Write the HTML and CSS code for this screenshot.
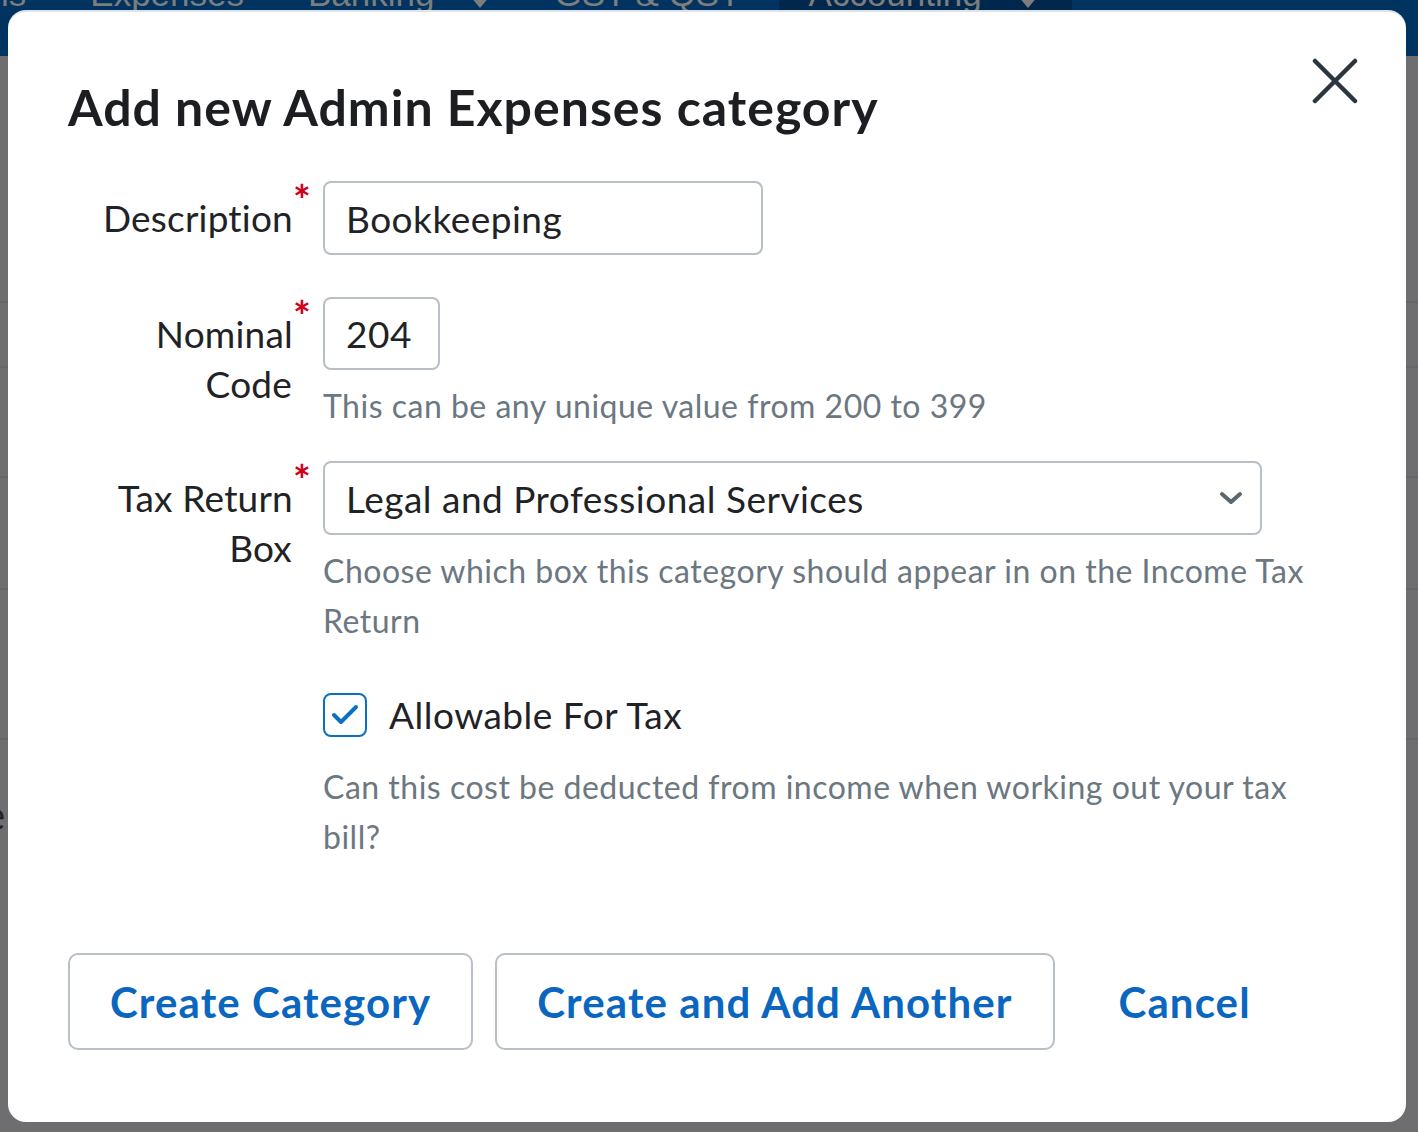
FILE: index.html
```html
<!DOCTYPE html>
<html>
<head>
    <meta charset="utf-8" />
    <meta name="viewport" content="width=device-width,initial-scale=1" />
    <title>Add new Admin Expenses category</title>
    <link rel="stylesheet" href="styles.css">
</head>
<body>
    <div id="nav">
        <span class="nav-item first">ls</span>
        <span class="nav-item">Expenses</span>
        <span class="nav-item">Banking<i class="caret"></i></span>
        <span class="nav-item">GST &amp; QST</span>
        <span class="nav-item active">Accounting<i class="caret"></i></span>
    </div>
    <div id="page">
        <div class="page-row r1">s</div>
        <div class="page-row r2"></div>
        <div class="page-row r3"></div>
        <div class="page-row r4"></div>
        <div class="page-row r5"></div>
        <div class="page-row r6">e</div>
    </div>

    <div id="modal">
        <div class="modal-head">
            <h1>Add new Admin Expenses category</h1>
            <button class="close" aria-label="Close">
                <svg width="46" height="46" viewBox="0 0 46 46">
                    <path d="M3 3 L43 43 M43 3 L3 43" stroke="#2b3640" stroke-width="4.5" stroke-linecap="round" fill="none"/>
                </svg>
            </button>
        </div>

        <form class="form">
            <label class="label">Description<span class="req">*</span></label>
            <div class="field">
                <input class="input" type="text" value="Bookkeeping">
            </div>

            <label class="label">Nominal<span class="req">*</span><br>Code</label>
            <div class="field">
                <input class="input short" type="text" value="204">
                <p class="hint">This can be any unique value from 200 to 399</p>
            </div>

            <label class="label">Tax Return<span class="req">*</span><br>Box</label>
            <div class="field">
                <div class="select">
                    <span>Legal and Professional Services</span>
                    <svg width="24" height="14" viewBox="0 0 24 14">
                        <path d="M3 3 L12 11 L21 3" stroke="#5b6670" stroke-width="4" stroke-linecap="round" stroke-linejoin="round" fill="none"/>
                    </svg>
                </div>
                <p class="hint">Choose which box this category should appear in on the Income Tax Return</p>
            </div>

            <div></div>
            <div class="field check-field">
                <label class="check">
                    <span class="box">
                        <svg width="30" height="24" viewBox="0 0 30 24">
                            <path d="M4 12 L11 19 L26 4" stroke="#0b6fc2" stroke-width="4" stroke-linecap="round" stroke-linejoin="round" fill="none"/>
                        </svg>
                    </span>
                    Allowable For Tax
                </label>
                <p class="hint">Can this cost be deducted from income when working out your tax bill?</p>
            </div>
        </form>

        <div class="actions">
            <button class="btn">Create Category</button>
            <button class="btn">Create and Add Another</button>
            <button class="btn plain">Cancel</button>
        </div>
    </div>
</body>
</html>
```

FILE: styles.css
```css
* {margin: 0; padding: 0; box-sizing: border-box;}
body {
    background: #6e6e71;
    font-family: Lato, "Noto Sans", sans-serif;
    height: 1132px;
    overflow: hidden;
}

#nav {
    height: 56px;
    background: #00335f;
    display: flex;
    align-items: flex-start;
    overflow: hidden;
    font-family: "Liberation Sans", Arial, sans-serif;
    font-size: 35px;
    color: #7d7d7d;
}
.nav-item {
    display: flex;
    align-items: flex-start;
    gap: 36px;
    padding: 0 32px;
    margin-top: -24px;
    height: 80px;
    line-height: 36px;
}
.nav-item.first {padding-left: 0; margin-left: 1px;}
.nav-item.active {background: #00284c; padding: 0 34px 0 30px; margin-left: 6px;}
.caret {
    display: inline-block;
    border-left: 10px solid transparent;
    border-right: 10px solid transparent;
    border-top: 12px solid #7d7d7d;
    margin-top: 20px;
}

.page-row {
    border-bottom: 2px solid #666669;
    font-size: 40px;
    color: #222;
    margin-left: -16px;
    line-height: 50px;
}
.r1 {height: 247px; padding-top: 160px;}
.r2 {height: 65px;}
.r3 {height: 110px;}
.r4 {height: 112px;}
.r5 {height: 150px;}
.r6 {height: 200px; padding-top: 50px; border-bottom: 0;}

#modal {
    position: absolute;
    left: 8px;
    top: 10px;
    width: 1398px;
    height: 1112px;
    background: #fff;
    border-radius: 18px;
    border-top: 2px solid #dde3ea;
    padding: 0 60px;
}

.modal-head {
    display: flex;
    justify-content: space-between;
    align-items: flex-start;
}
h1 {
    font-size: 50px;
    font-weight: 700;
    color: #1c1e21;
    line-height: 58px;
    margin-top: 66px;
    letter-spacing: 1px;
}
.close {
    background: none;
    border: 0;
    margin-top: 46px;
    margin-right: -12px;
    width: 46px;
    height: 46px;
}

.form {
    display: grid;
    grid-template-columns: 224px 1fr;
    column-gap: 31px;
    margin-top: 45px;
    color: #1f2326;
    letter-spacing: 0.5px;
}

.label {
    text-align: right;
    font-size: 37px;
    line-height: 50px;
    padding-top: 12px;
    letter-spacing: 0.2px;
}
.req {
    color: #d0021b;
    font-weight: 700;
    font-size: 42px;
    vertical-align: 16px;
    line-height: 0;
    margin-right: -19px;
    margin-left: 0;
}

.field {
    margin-bottom: 42px;
}
.field:nth-child(4) {margin-bottom: 30px;}
.field:nth-child(6) {margin-bottom: 47px;}

.input {
    display: block;
    width: 440px;
    height: 74px;
    border: 2px solid #b8bfc6;
    border-radius: 8px;
    padding: 0 21px;
    font-family: inherit;
    font-size: 37px;
    letter-spacing: 0.5px;
    color: #1f2326;
    outline: 0;
}
.input.short {width: 117px; height: 73px;}

.hint {
    margin-top: 11px;
    max-width: 1000px;
    font-size: 32px;
    line-height: 50px;
    letter-spacing: 0.5px;
    color: #6b7781;
}

.select {
    display: flex;
    justify-content: space-between;
    align-items: center;
    width: 939px;
    height: 74px;
    border: 2px solid #b8bfc6;
    border-radius: 8px;
    padding: 0 17px 0 21px;
    font-size: 37px;
}

.check-field {margin-bottom: 0;}
.check {
    display: flex;
    align-items: center;
    gap: 22px;
    font-size: 37px;
    line-height: 44px;
}
.box {
    width: 44px;
    height: 44px;
    border: 2px solid #0b6fc2;
    border-radius: 8px;
    display: flex;
    align-items: center;
    justify-content: center;
}
.check-field .hint {margin-top: 25px;}

.actions {
    display: flex;
    gap: 22px;
    margin-top: 91px;
}
.btn {
    height: 97px;
    padding: 0 40px;
    background: #fff;
    border: 2px solid #b8bfc6;
    border-radius: 10px;
    font-family: inherit;
    font-size: 42px;
    font-weight: 700;
    letter-spacing: 1.1px;
    color: #0a66bf;
}
.btn.plain {border-color: transparent;}
```
